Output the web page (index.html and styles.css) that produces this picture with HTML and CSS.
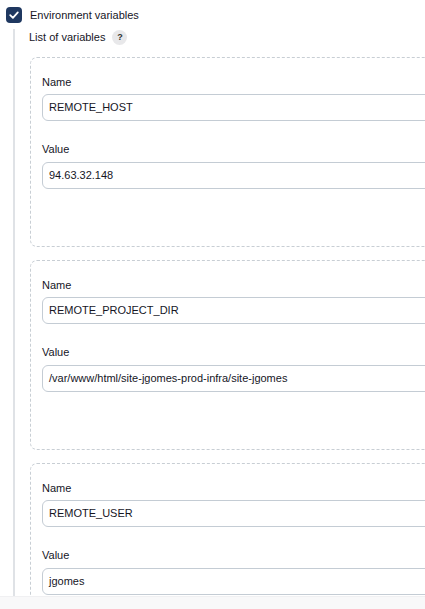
FILE: index.html
```html
<!DOCTYPE html>
<html>
<head>
<meta charset="utf-8">
<link rel="stylesheet" href="styles.css">
</head>
<body>
<div class="page">
  <label class="check-row">
    <span class="checkbox">
      <svg viewBox="0 0 16 16" width="16" height="16"><path d="M4.2 8.2 L6.9 10.8 L11.8 5.4" fill="none" stroke="#fff" stroke-width="1.8" stroke-linecap="round" stroke-linejoin="round"/></svg>
    </span>
    <span class="check-label">Environment variables</span>
  </label>
  <div class="nested">
    <div class="list-head">
      <span>List of variables</span>
      <span class="help">?</span>
    </div>
    <div class="repeated">
      <div class="chunk">
        <div class="field-label">Name</div>
        <div class="input">REMOTE_HOST</div>
        <div class="field-label second">Value</div>
        <div class="input">94.63.32.148</div>
      </div>
      <div class="chunk">
        <div class="field-label">Name</div>
        <div class="input">REMOTE_PROJECT_DIR</div>
        <div class="field-label second">Value</div>
        <div class="input">/var/www/html/site-jgomes-prod-infra/site-jgomes</div>
      </div>
      <div class="chunk">
        <div class="field-label">Name</div>
        <div class="input">REMOTE_USER</div>
        <div class="field-label second">Value</div>
        <div class="input">jgomes</div>
      </div>
    </div>
  </div>
</div>
<div class="bottom-bar"></div>
</body>
</html>
```

FILE: styles.css
```css
html, body {
  margin: 0;
  padding: 0;
  background: #fff;
  overflow: hidden;
}
body {
  font-family: "Liberation Sans", Arial, sans-serif;
  font-size: 11px;
  color: #16161f;
}
.page {
  padding: 7px 0 0 6px;
  width: 600px;
}
.check-row {
  display: flex;
  align-items: center;
  height: 16px;
}
.checkbox {
  width: 16px;
  height: 16px;
  border-radius: 4px;
  background: #1f3860;
  display: flex;
  align-items: center;
  justify-content: center;
}
.checkbox svg { display: block; }
.check-label {
  margin-left: 8px;
  line-height: 16px;
}
.nested {
  margin-left: 7px;
  margin-top: 6px;
  border-left: 2px solid #dfe2e6;
  padding-left: 14px;
}
.list-head {
  display: flex;
  align-items: center;
  height: 16px;
}
.help {
  margin-left: 7px;
  width: 15px;
  height: 15px;
  border-radius: 50%;
  background: #e8e8ea;
  color: #333;
  font-size: 9px;
  font-weight: bold;
  display: flex;
  align-items: center;
  justify-content: center;
}
.repeated {
  margin-top: 12px;
  margin-left: 1px;
  display: flex;
  flex-direction: column;
  gap: 13px;
}
.chunk {
  border: 1px dashed #c8ced4;
  border-radius: 7px;
  padding: 16px 0 57px 11px;
}
.field-label {
  line-height: 16px;
  margin-bottom: 4px;
}
.field-label.second {
  margin-top: 20px;
  margin-bottom: 5px;
}
.input {
  height: 25px;
  border: 1px solid #c4ccd4;
  border-radius: 6px;
  line-height: 25px;
  padding-left: 6px;
  background: #fff;
}
.bottom-bar {
  position: fixed;
  left: 0;
  right: 0;
  bottom: 0;
  height: 12px;
  background: #f8f8f9;
  border-top: 1px solid #f0f0f2;
}
```
